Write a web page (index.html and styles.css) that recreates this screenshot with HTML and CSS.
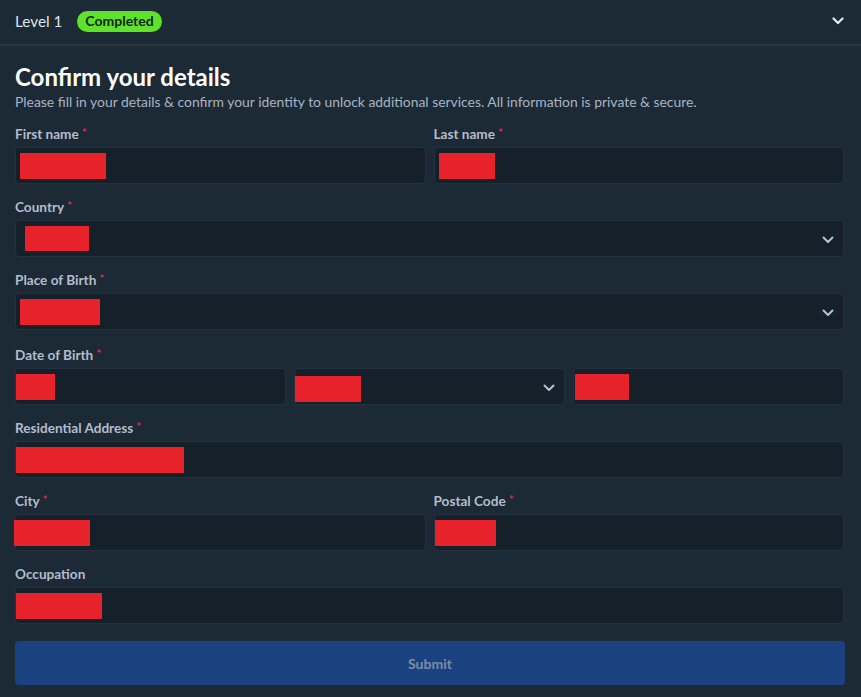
FILE: index.html
```html
<!DOCTYPE html>
<html>
<head>
<meta charset="utf-8">
<link rel="stylesheet" href="styles.css">
</head>
<body>
<div class="panel">
  <header class="level-head">
    <div class="level-left">
      <span class="level-title">Level 1</span>
      <span class="badge">Completed</span>
    </div>
    <svg class="head-chev" width="12" height="8" viewBox="0 0 12 8"><path d="M1.5 1.5 L6 6 L10.5 1.5" fill="none" stroke="#e6ebf2" stroke-width="2.2" stroke-linecap="round" stroke-linejoin="round"/></svg>
  </header>

  <main class="form">
    <h1 class="title">Confirm your details</h1>
    <p class="subtitle">Please fill in your details &amp; confirm your identity to unlock additional services. All information is private &amp; secure.</p>

    <div class="row two first">
      <div class="field">
        <label>First name <span class="req">*</span></label>
        <div class="input"><span class="redact" style="margin-left:4px;width:86px"></span></div>
      </div>
      <div class="field">
        <label>Last name <span class="req">*</span></label>
        <div class="input"><span class="redact" style="margin-left:4px;width:56px"></span></div>
      </div>
    </div>

    <div class="field">
      <label>Country <span class="req">*</span></label>
      <div class="input select"><span class="redact" style="margin-left:9px;width:64px;height:25px"></span>
        <svg class="chev" width="12" height="8" viewBox="0 0 12 8"><path d="M1.5 1.5 L6 6 L10.5 1.5" fill="none" stroke="#b5c0d2" stroke-width="2" stroke-linecap="round" stroke-linejoin="round"/></svg></div>
    </div>

    <div class="field">
      <label>Place of Birth <span class="req">*</span></label>
      <div class="input select"><span class="redact" style="margin-left:4px;width:80px"></span>
        <svg class="chev" width="12" height="8" viewBox="0 0 12 8"><path d="M1.5 1.5 L6 6 L10.5 1.5" fill="none" stroke="#b5c0d2" stroke-width="2" stroke-linecap="round" stroke-linejoin="round"/></svg></div>
    </div>

    <div class="field dob">
      <label>Date of Birth <span class="req">*</span></label>
      <div class="row three">
        <div class="input"><span class="redact" style="margin-left:0;width:39px"></span></div>
        <div class="input select"><span class="redact" style="margin-left:0;width:66px;margin-top:4px"></span>
          <svg class="chev" width="12" height="8" viewBox="0 0 12 8"><path d="M1.5 1.5 L6 6 L10.5 1.5" fill="none" stroke="#b5c0d2" stroke-width="2" stroke-linecap="round" stroke-linejoin="round"/></svg></div>
        <div class="input"><span class="redact" style="margin-left:1px;width:54px"></span></div>
      </div>
    </div>

    <div class="field">
      <label>Residential Address <span class="req">*</span></label>
      <div class="input"><span class="redact" style="margin-left:0;width:168px"></span></div>
    </div>

    <div class="row two">
      <div class="field">
        <label>City <span class="req">*</span></label>
        <div class="input"><span class="redact" style="margin-left:-2px;width:76px"></span></div>
      </div>
      <div class="field">
        <label>Postal Code <span class="req">*</span></label>
        <div class="input"><span class="redact" style="margin-left:0;width:61px"></span></div>
      </div>
    </div>

    <div class="field">
      <label>Occupation</label>
      <div class="input"><span class="redact" style="margin-left:0;width:86px"></span></div>
    </div>

    <button class="submit">Submit</button>
  </main>
</div>
</body>
</html>
```

FILE: styles.css
```css
* { box-sizing: border-box; }
html, body { margin: 0; padding: 0; }
body {
  background: #1b2a35;
  font-family: "Lato", "Open Sans", sans-serif;
  color: #e8edf3;
  width: 861px;
  height: 697px;
  overflow: hidden;
}
.level-head {
  height: 46px;
  border-bottom: 2px solid #253642;
  display: flex;
  align-items: center;
  justify-content: space-between;
  padding: 0 17px 2px 15px;
}
.level-left { display: flex; align-items: center; gap: 15px; }
.level-title { font-size: 15.3px; color: #dfe5ee; }
.badge {
  background: #5fe22b;
  color: #10250a;
  font-size: 14px;
  font-weight: 700;
  border-radius: 11px;
  padding: 2px 8px 3px;
  line-height: 16px;
}
.head-chev { display: block; }
.form {
  padding: 18px 17px 0 15px;
}
.title {
  margin: 0;
  font-size: 24px;
  font-weight: 700;
  line-height: 26px;
  color: #ffffff;
}
.subtitle {
  margin: 3px 0 0;
  font-size: 13.9px;
  line-height: 18px;
  color: #a9b3c3;
}
.row { display: grid; gap: 8px; }
.row.two { grid-template-columns: 1fr 1fr; margin-top: 15px; }
.row.two.first { margin-top: 15px; }
.row.three { grid-template-columns: 1fr 1fr 1fr; }
.field { display: flex; flex-direction: column; margin-top: 15px; }
.row .field { margin-top: 0; }
.field.dob { margin-top: 17px; }
label {
  display: block;
  height: 16px;
  font-size: 13.6px;
  font-weight: 700;
  color: #b3bccd;
  line-height: 16px;
  margin-bottom: 5px;
}
.req { color: #e0284e; font-size: 11px; line-height: 0; vertical-align: 2px; }
.input {
  height: 37px;
  background: #15202a;
  border: 1px solid #22323f;
  border-radius: 4px;
  display: flex;
  align-items: center;
  position: relative;
}
.redact {
  display: block;
  height: 26px;
  background: #e7222a;
}
.select .chev {
  position: absolute;
  right: 9px;
  top: 15px;
}
.submit {
  margin-top: 17px;
  width: 830px;
  height: 44px;
  border: none;
  border-radius: 4px;
  background: #1a4180;
  color: #7e8ea3;
  font-family: inherit;
  font-size: 14px;
  font-weight: 700;
}
```
